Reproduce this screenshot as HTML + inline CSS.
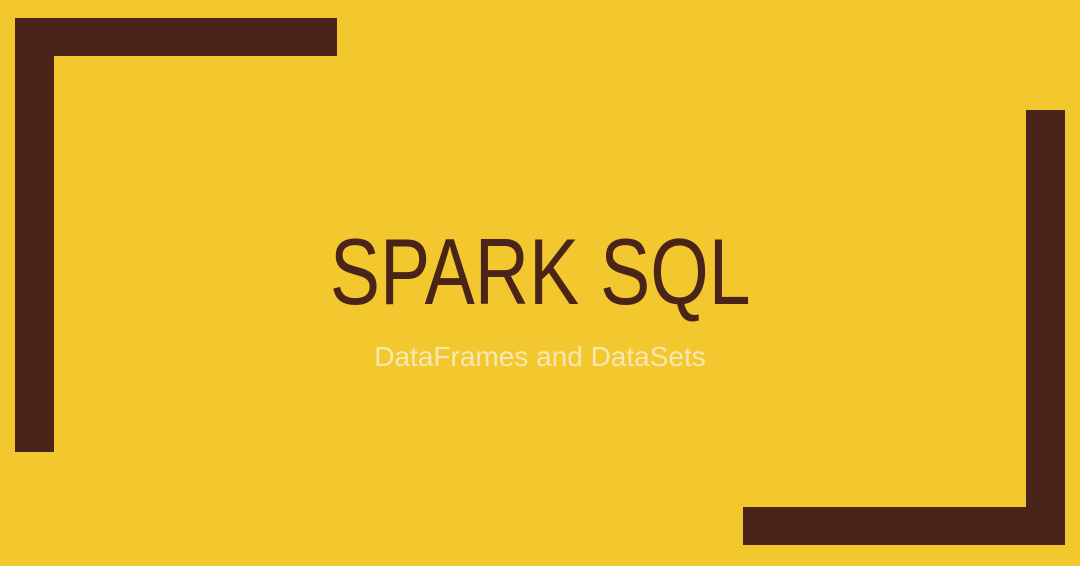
<!DOCTYPE html>
<html><head><meta charset="utf-8"><style>
html,body{margin:0;padding:0}
body{width:1080px;height:566px;background:#F2C82E;position:relative;overflow:hidden;font-family:"Liberation Sans",sans-serif}
.b{position:absolute;background:#4A2319}
.t{position:absolute;left:0;width:1080px;text-align:center;white-space:nowrap}
</style></head><body>
<div class="b" style="left:15px;top:18px;width:322px;height:38px"></div>
<div class="b" style="left:15px;top:18px;width:39px;height:434px"></div>
<div class="b" style="left:1026px;top:110px;width:39px;height:435px"></div>
<div class="b" style="left:743px;top:507px;width:322px;height:38px"></div>
<div class="t" style="top:222px;font-size:94px;line-height:100px;color:#4A2319;transform:scaleX(0.80);transform-origin:541px 0">SPARK SQL</div>
<div class="t" style="top:340px;font-size:28px;line-height:34px;color:#F8E7B4">DataFrames and DataSets</div>
</body></html>
